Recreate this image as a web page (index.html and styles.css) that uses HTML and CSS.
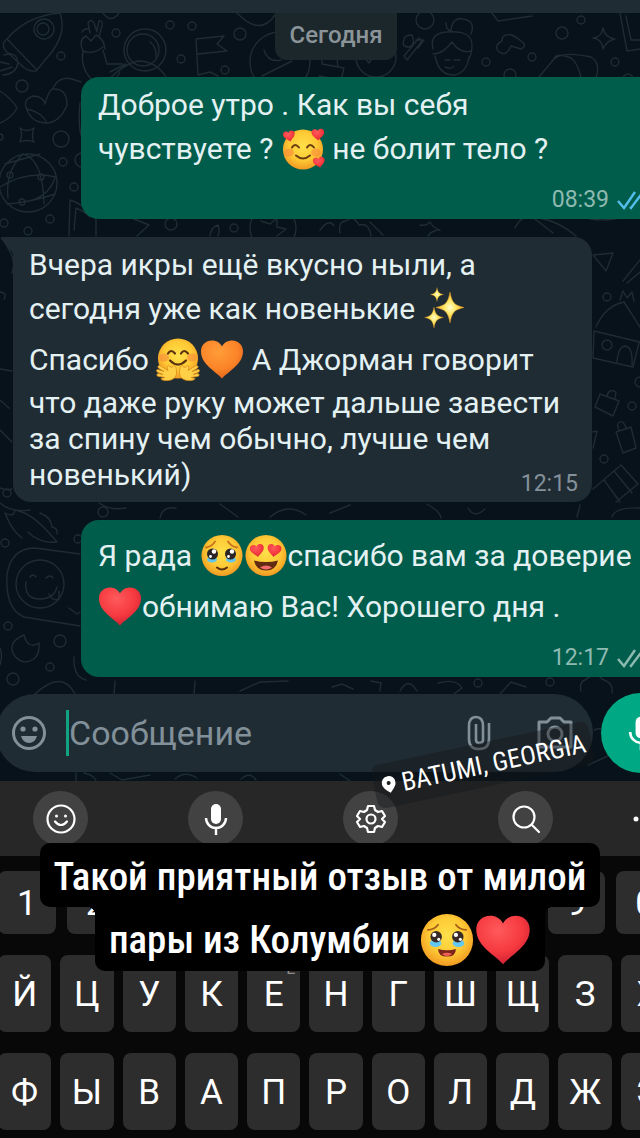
FILE: index.html
```html
<!DOCTYPE html>
<html lang="ru">
<head>
<meta charset="utf-8">
<meta name="viewport" content="width=device-width, initial-scale=1">
<title>Сообщения</title>
<link rel="stylesheet" href="styles.css">
</head>
<body>
<svg class="defs" aria-hidden="true">
  <defs>
    <radialGradient id="skin" cx="50%" cy="42%" r="58%">
      <stop offset="0" stop-color="#ffe04a"/><stop offset=".6" stop-color="#fdca35"/><stop offset="1" stop-color="#f19a22"/>
    </radialGradient>
    <radialGradient id="redheart" cx="42%" cy="30%" r="75%">
      <stop offset="0" stop-color="#ff5a5c"/><stop offset=".6" stop-color="#f5393f"/><stop offset="1" stop-color="#c91d33"/>
    </radialGradient>
    <radialGradient id="orangeheart" cx="42%" cy="30%" r="75%">
      <stop offset="0" stop-color="#ff9d38"/><stop offset=".6" stop-color="#fb8428"/><stop offset="1" stop-color="#e0621a"/>
    </radialGradient>
    <radialGradient id="spark" cx="50%" cy="50%" r="50%">
      <stop offset="0" stop-color="#fffbd0"/><stop offset=".4" stop-color="#ffe866"/><stop offset="1" stop-color="#eda826"/>
    </radialGradient>
    <path id="heart" d="M22 41C16 34 1 27 1 14 1 7 6 3 12 3c4 0 8 2 10 6 2-4 6-6 10-6 6 0 11 4 11 11 0 13-15 20-21 27z"/>
    <path id="star" d="M0-10C1.500-3 3-1.500 10 0 3 1.500 1.500 3 0 10-1.500 3-3 1.500-10 0-3-1.500-1.500-3 0-10z"/>
    <symbol id="e-adore" viewBox="0 0 44 44">
      <circle cx="22" cy="23" r="20" fill="url(#skin)"/>
      <ellipse cx="8" cy="26" rx="5" ry="4" fill="#f98a3c" opacity=".6"/><ellipse cx="35" cy="26" rx="5" ry="4" fill="#f98a3c" opacity=".6"/>
      <path d="M11 21q3-5 7 0M26 21q3-5 7 0" fill="none" stroke="#6b3d11" stroke-width="2" stroke-linecap="round"/>
      <path d="M15 29q7 6 14 0" fill="none" stroke="#6b3d11" stroke-width="2" stroke-linecap="round"/>
      <g fill="url(#redheart)"><use href="#heart" transform="translate(1 5) rotate(-12) scale(.28)"/><use href="#heart" transform="translate(30 2) rotate(-4) scale(.3)"/><use href="#heart" transform="translate(31 31) rotate(-10) scale(.28)"/></g>
    </symbol>
    <symbol id="e-hug" viewBox="0 0 44 44">
      <circle cx="22" cy="21" r="20" fill="url(#skin)"/>
      <ellipse cx="8" cy="20" rx="5" ry="4" fill="#f98a3c" opacity=".6"/><ellipse cx="36" cy="20" rx="5" ry="4" fill="#f98a3c" opacity=".6"/>
      <path d="M12 16q3-5 7 0M25 16q3-5 7 0M14 23q8 8 16 0" fill="none" stroke="#5b3210" stroke-width="2.200" stroke-linecap="round"/>
      <g fill="#ffcf45" stroke="#d98a1c" stroke-width=".8" stroke-linejoin="round">
        <path d="M14 29c-2-2-4 0-2 4l-8-5c-2 0-3 1-1 3l5 3-6-2c-2 0-2 2 0 3l5 2-5-1c-2 1-1 3 1 3l6 1-4 1c0 2 7 3 11 1 5-2 5-7 4-12-1-2-3-3-4 0z"/>
        <path d="M30 29c2-2 4 0 2 4l8-5c2 0 3 1 1 3l-5 3 6-2c2 0 2 2 0 3l-5 2 5-1c2 1 1 3-1 3l-6 1 4 1c0 2-7 3-11 1-5-2-5-7-4-12 1-2 3-3 4 0z"/>
      </g>
    </symbol>
    <symbol id="e-orange" viewBox="0 0 44 44"><use href="#heart" fill="url(#orangeheart)"/></symbol>
    <symbol id="e-red" viewBox="0 0 44 44"><use href="#heart" fill="url(#redheart)"/></symbol>
    <symbol id="e-sparkles" viewBox="0 0 44 44">
      <g fill="url(#spark)" stroke="#e39b27" stroke-width=".3"><use href="#star" transform="translate(27 21) scale(1.400 1.550)"/><use href="#star" transform="translate(14 8) scale(.65 .7)"/><use href="#star" transform="translate(11 31) scale(.95 1.050)"/></g>
    </symbol>
    <symbol id="e-tears" viewBox="0 0 44 44">
      <circle cx="22" cy="22" r="20.500" fill="url(#skin)"/>
      <ellipse cx="12" cy="26" rx="5" ry="3" fill="#62c6ee"/><ellipse cx="31" cy="26" rx="5" ry="3" fill="#62c6ee"/>
      <circle cx="12.500" cy="20.500" r="5.500" fill="#2c2424"/><circle cx="30.500" cy="20.500" r="5.500" fill="#2c2424"/>
      <g fill="#fff"><circle cx="14" cy="18" r="2.200"/><circle cx="32" cy="18" r="2.200"/><circle cx="10.500" cy="23" r="1.400"/><circle cx="28.500" cy="23" r="1.400"/></g>
      <path d="M6 14q6-1 9-6M37 14q-6-1-9-6" fill="none" stroke="#c9741d" stroke-width="1.800" stroke-linecap="round"/>
      <path d="M17 34q5 4 10 0" fill="none" stroke="#5b3210" stroke-width="2" stroke-linecap="round"/>
    </symbol>
    <symbol id="e-tears-open" viewBox="0 0 44 44">
      <circle cx="22" cy="22" r="20.500" fill="url(#skin)"/>
      <ellipse cx="13" cy="24.500" rx="4.500" ry="3" fill="#63c9f2"/><ellipse cx="31" cy="24.500" rx="4.500" ry="3" fill="#63c9f2"/>
      <circle cx="13.500" cy="19.500" r="4.500" fill="#382a27"/><circle cx="30.500" cy="19.500" r="4.500" fill="#382a27"/>
      <g fill="#fff"><circle cx="12" cy="18" r="1.700"/><circle cx="29" cy="18" r="1.700"/><circle cx="15.500" cy="21.500" r="1.200"/><circle cx="32.500" cy="21.500" r="1.200"/></g>
      <path d="M7 14q5 0 8-4M37 14q-5 0-8-4" fill="none" stroke="#a85d19" stroke-width="1.400" stroke-linecap="round"/>
      <path d="M15 29q7 2 14 0 0 6-7 6t-7-6z" fill="#7d251c"/><path d="M18 33q4-2 8 0-4 3-8 0z" fill="#ef6158"/>
    </symbol>
    <symbol id="e-hearteyes" viewBox="0 0 44 44">
      <circle cx="22" cy="22" r="20.500" fill="url(#skin)"/>
      <g fill="url(#redheart)"><use href="#heart" transform="translate(5 11) rotate(-8) scale(.33)"/><use href="#heart" transform="translate(24 9) rotate(8) scale(.33)"/></g>
      <path d="M10 27q12 3 24 0-2 10-12 10T10 27z" fill="#612b12"/><path d="M16 34q6-4 12 0-6 4-12 0z" fill="#f06b6b"/>
    </symbol>
    <symbol id="ticks" viewBox="0 0 32 20"><path d="M1 11l6 7L18 2M13 17l1 1L26 2" fill="none" stroke="currentColor" stroke-width="2.400"/></symbol>
    <symbol id="mic" viewBox="0 0 24 32"><rect x="7" y="1" width="10" height="20" rx="5" fill="currentColor"/><path d="M2 15a10 10 0 0 0 20 0M12 25v7" fill="none" stroke="currentColor" stroke-width="2.400"/></symbol>
  </defs>
</svg>

<main class="screen">
  <div class="topbar"></div>
  <section class="chat">
    <svg class="wallpaper" viewBox="0 13 640 768" preserveAspectRatio="xMidYMin slice" aria-hidden="true">
      <g fill="none" stroke="#1f2c33" stroke-width="1.400" stroke-linecap="round" stroke-linejoin="round">
        <path d="M7 39Q26 16 60 13q8 22-14 46l-10 12q-8 1-15-6L5 50q-4-7 2-11zM7 39l29 30M4 55q13-4 14 8-2 11-15 12M0 62l9 2M0 71l12-4"/>
        <circle cx="44" cy="29" r="10"/><circle cx="43" cy="29" r="6"/><circle cx="61" cy="56" r="4"/><circle cx="22" cy="86" r="6"/>
        <path d="M83 51q-5-11 3-15l5 5 5-6q8 4 9 14M90 33l-2-10q3-5 6 0l3 9M97 30l2-9q4-1 3 5l-3 10M83 51q10 4 20-4M83 51q-3 16 8 28M103 50l4 14h16M82 32q2-4 7-3"/>
        <circle cx="145" cy="50" r="21"/><circle cx="143" cy="50" r="16"/><path d="M150 42q7 5 6 15M108 80q16-16 30-19 18 0 28 16M110 72l16-8M120 72l-5 8"/>
        <circle cx="170" cy="25" r="4"/><circle cx="192" cy="26" r="4"/><circle cx="116" cy="33" r="4"/><circle cx="181" cy="59" r="4"/><circle cx="240" cy="34" r="6"/><circle cx="225" cy="70" r="4"/>
        <path d="M198 75l-2-36 28-3-7 8 10 7-29 3M198 75l12-3 8 4M103 13q8 11 16 0M237 13q23 24 38 2"/>
        <circle cx="280" cy="62" r="30"/><path d="M262 76l30-15M264 50q4 13 17 10"/>
        <path d="M0 91q12 8 17 17Q12 118 0 123M53 88q7-14 22-8l6 2M53 88q-5 4-8 16-2-8-12-8-11 4-6 14 5 13 20 13 13-1 20-18 0-17-14-16M27 109q15 3 20 14M80 103q-2 20 1 32"/>
        <path d="M20 128q7 5 14 0-3 8 0 14-7-3-14 0 3-8 0-14z"/><circle cx="61" cy="139" r="8"/><circle cx="63" cy="162" r="4"/><circle cx="74" cy="187" r="4"/><circle cx="82" cy="160" r="7"/><circle cx="0" cy="137" r="3"/>
        <circle cx="28" cy="183" r="29"/><path d="M5 164l35-10M0 187q27-17 56-10M7 204q25-2 48-10M23 154q-18 17-15 44M23 154q20 5 21 50M55 178q-8 22-33 24"/><circle cx="10" cy="175" r="3"/><circle cx="41" cy="177" r="3"/><circle cx="22" cy="202" r="3"/>
        <path d="M69 236l1-36q14 4 26 19v17M74 230l2-22q8 3 14 9"/><circle cx="50" cy="219" r="4"/><circle cx="28" cy="231" r="4"/><circle cx="4" cy="223" r="4"/><circle cx="171" cy="224" r="6"/><circle cx="234" cy="228" r="4"/><path d="M134 219l15 6-12 11M210 236q1-9 8-11 2 6 0 11"/><circle cx="273" cy="228" r="23"/><path d="M261 221l9 3 7-6v9l9 2-9 7"/>
        <path d="M322 57v7l22 4-3 12-22-4M330 58l7 1 1 8"/><circle cx="376" cy="57" r="20"/><path d="M364 57l5 6 6-9"/><circle cx="425" cy="20" r="9"/>
        <path d="M416 40h8l-6 8M404 40q0-5 8-5 4 10-3 12-8 0-5-7zM404 56l15-18 3 3-15 19z"/>
        <path d="M433 49q-4-16 14-17 25-2 25 13 0 10-4 15M433 54q10 0 19-12 8 12 19 9M435 56q4 20 20 19 12-3 14-18M451 31q1-14 12-12 13 2 8 15M446 23q0 7 5 8M445 60h5M454 60h6M445 67q7 3 9-1"/>
        <circle cx="486" cy="62" r="4"/><circle cx="532" cy="57" r="4"/><circle cx="562" cy="33" r="6"/><circle cx="581" cy="20" r="4"/><circle cx="615" cy="62" r="4"/><circle cx="510" cy="75" r="6"/><circle cx="628" cy="79" r="5"/>
        <path d="M498 51q-4-6 4-10 0-8 10-6 6 3 9 6 7 4 0 8l-10-3q-5 12-13 5zM492 13l6 8 34-5M593 38q9-1 10-10 2 10 12 11-9 2-12 10-1-10-10-11zM620 13l7 38 13-2M626 16l5 24h9M539 77l15-18q10-8 37-2 10 6 5 21M554 59q2-7 17-1 6 4 10 19"/>
        <path d="M320 230q9-12 14-4M340 233q-2-12 6-12 7-7 13 4 10-3 12 11M420 225q7 1 10-3 3 6 10 8-8 0-12 6M370 222l13 13M515 228q8-16 20-9l18 14M540 218q20 4 36 18M590 219q20 3 38-4"/>
        <path d="M593 255l20-2-7 18zM623 281l17-21M627 283l13-11M596 327q9-21 28-25l16 25M620 300l3-9 4 7 5-6 2 9M594 331l46 11M594 331l-1 27 40 9 6-24M617 362q1-15 8-16 8 1 7 19"/><circle cx="607" cy="297" r="4"/><circle cx="607" cy="345" r="5"/>
        <path d="M600 394l19 7-6 15-18-9zM607 396q2-8 9-4l-1 6M616 432l15-5 5 21-13 5zM619 430q-4-9 4-8l4 7M592 432l5-1-4 17M593 489l28-24 17 19-22 18M604 480l16 22M614 471l18 22"/><circle cx="632" cy="406" r="4"/><circle cx="604" cy="459" r="4"/><circle cx="640" cy="382" r="5"/>
        <path d="M0 369l12 2M0 400l9 8M0 430l12 12M0 488q6 3 12 1M3 239l7 13q6 10 2 21M0 292q8 1 4 7"/><circle cx="7" cy="493" r="4"/>
        <path d="M5 513q7 18 17 25M5 513q9 5 10-3M18 511q15 2 39 31-17 2-29-10M40 513q11 4 12 14 6 1 5 7"/><circle cx="103" cy="512" r="5"/><circle cx="5" cy="543" r="4"/><circle cx="78" cy="539" r="4"/>
        <path d="M80 554l-45-6q-24 0-28 27-2 34 17 42l56 9"/><circle cx="40" cy="584" r="24"/><path d="M30 577q3-4 6 0M46 578q4-4 7 0M26 582q-2 17 14 17 14 0 17-12M49 594q4 8 10 5v-8M69 608l8 6 3-2"/>
        <path d="M24 635q-17 7-10 20 9 12 21 3 5-6 4-15-11 7-15-8z"/><circle cx="60" cy="641" r="6"/><circle cx="50" cy="667" r="4"/><circle cx="13" cy="679" r="6"/><circle cx="8" cy="626" r="4"/><path d="M0 648q3 8 0 17M74 657q-1 20 12 23M35 694q27-25 40 0"/>
        <path d="M115 681l-1 13M195 681l-1 13M240 691l20-9 28-1M332 687l10-3 11 5M371 681l10 2-1 8M400 691q8-15 17 0M438 683q18-5 24 5l-8 6M500 694l11-12 15 5M581 691q-2-9 4-11 11-9 17-1 12 4 10 14"/><circle cx="478" cy="683" r="4"/><circle cx="550" cy="682" r="4"/>
        <path d="M76 781v-8M84 773q10 2 12 8M110 773l12 7 28-5M175 779q10-9 22-1M241 779q9-8 15 1M340 774l10 7M447 773q11-5 14 8M594 730q13-5 11 9M588 765l20-9 5-25"/>
        <path d="M0 503q12 10 30 7M99 503q12 8 27 5M160 518q2-12 16-10M220 504l18 13M270 517q18-15 36-2M330 513l20-8M427 504q13 7 14 14M468 508q6 11 17 1M580 505l-3 12M612 517q3-10 28-9"/>
      </g>
    </svg>

    <div class="day">Сегодня</div>

    <article class="bubble bubble--out">
      <p class="text">Доброе утро . Как вы себя<br>чувствуете ? <svg class="emoji" role="img" aria-label="🥰"><use href="#e-adore"/></svg> не болит тело ?</p>
      <div class="meta meta--read"><time>08:39</time><svg class="ticks" role="img" aria-label="Прочитано"><use href="#ticks"/></svg></div>
    </article>

    <article class="bubble bubble--in">
      <svg class="tail" viewBox="0 0 14 18" aria-hidden="true"><path d="M14 0H2Q0 0 1 2l13 16z" fill="#202c33"/></svg>
      <p class="text">Вчера икры ещё вкусно ныли, а<br>сегодня уже как новенькие <svg class="emoji" role="img" aria-label="✨"><use href="#e-sparkles"/></svg><br>Спасибо <svg class="emoji" role="img" aria-label="🤗"><use href="#e-hug"/></svg><svg class="emoji" role="img" aria-label="🧡"><use href="#e-orange"/></svg> А Джорман говорит<br>что даже руку может дальше завести<br>за спину чем обычно, лучше чем<br>новенький)</p>
      <div class="meta"><time>12:15</time></div>
    </article>

    <article class="bubble bubble--out">
      <p class="text">Я рада <svg class="emoji" role="img" aria-label="🥹"><use href="#e-tears"/></svg><svg class="emoji" role="img" aria-label="😍"><use href="#e-hearteyes"/></svg>спасибо вам за доверие<br><svg class="emoji" role="img" aria-label="❤️"><use href="#e-red"/></svg>обнимаю Вас! Хорошего дня .</p>
      <div class="meta"><time>12:17</time><svg class="ticks" role="img" aria-label="Доставлено"><use href="#ticks"/></svg></div>
    </article>

    <form class="composer">
      <div class="field">
        <button class="icon" type="button" aria-label="Эмодзи"><svg width="36" height="36" viewBox="0 0 36 36"><circle cx="18" cy="18" r="15.500" fill="none" stroke="currentColor" stroke-width="3"/><circle cx="12" cy="14" r="2.600" fill="currentColor"/><circle cx="24" cy="14" r="2.600" fill="currentColor"/><path d="M10 21h16q-2 7-8 7t-8-7z" fill="currentColor"/></svg></button>
        <span class="entry"><input type="text" aria-label="Сообщение" placeholder="Сообщение"></span>
        <button class="icon" type="button" aria-label="Прикрепить"><svg width="24" height="36" viewBox="0 0 24 36"><path d="M22 8v16q0 10-10 10T2 24V11q0-9 7-9t7 9v14q0 3-3.500 3T9 25V9" fill="none" stroke="currentColor" stroke-width="2.600"/></svg></button>
        <button class="icon icon--camera" type="button" aria-label="Камера"><svg width="36" height="34" viewBox="0 0 36 34"><path d="M2 6h8l4-4h9l4 4h7v25H2z" fill="none" stroke="currentColor" stroke-width="3" stroke-linejoin="round"/><circle cx="18" cy="18" r="7" fill="none" stroke="currentColor" stroke-width="3"/></svg></button>
      </div>
      <button class="voice" type="button" aria-label="Голосовое сообщение"><svg width="26" height="36"><use href="#mic"/></svg></button>
    </form>
  </section>

  <section class="keyboard">
    <a class="place" href="#batumi"><svg width="14" height="18" viewBox="0 0 14 18" aria-hidden="true"><path fill-rule="evenodd" d="M7 17Q0 11 0 7a7 7 0 0 1 14 0q0 4-7 10zM7 5a2 2 0 1 0 0 4 2 2 0 0 0 0-4z" fill="#fff"/></svg><span>BATUMI, GEORGIA</span></a>

    <div class="tools">
      <button class="tool" type="button" aria-label="Смайлики"><svg width="30" height="30" viewBox="0 0 30 30" fill="none" stroke="#fff" stroke-width="2.200"><circle cx="15" cy="15" r="13.500"/><path d="M9 17.500q6 7 12 0" stroke-linecap="round"/><circle cx="10.500" cy="12" r="1.500" fill="#fff" stroke="none"/><circle cx="19.500" cy="12" r="1.500" fill="#fff" stroke="none"/></svg></button>
      <button class="tool" type="button" aria-label="Голосовой ввод"><svg width="24" height="32"><use href="#mic"/></svg></button>
      <button class="tool" type="button" aria-label="Настройки"><svg width="30" height="30" viewBox="0 0 30 30" fill="none" stroke="#fff" stroke-width="2.200" stroke-linejoin="round"><path d="M12 2h6l1 4 3 2 4-1 3 5-3 3 3 3-3 5-4-1-3 2-1 4h-6l-1-4-3-2-4 1-3-5 3-3-3-3 3-5 4 1 3-2z"/><circle cx="15" cy="15" r="4.500"/></svg></button>
      <button class="tool" type="button" aria-label="Поиск"><svg width="30" height="30" viewBox="0 0 30 30" fill="none" stroke="#fff" stroke-width="2.200" stroke-linecap="round"><circle cx="13" cy="13" r="10.500"/><path d="M21 21l7 7"/></svg></button>
      <button class="more" type="button" aria-label="Ещё"><svg width="30" height="8" viewBox="0 0 30 8" fill="#fff"><circle cx="3" cy="4" r="2.500"/><circle cx="14" cy="4" r="2.500"/><circle cx="25" cy="4" r="2.500"/></svg></button>
    </div>

    <div class="keys">
      <div class="row row--digits"><button type="button">1</button><button type="button">2</button><button type="button">3</button><button type="button">4</button><button type="button">5</button><button type="button">6</button><button type="button">7</button><button type="button">8</button><button type="button">9</button><button type="button">0</button></div>
      <div class="row"><button type="button">Й</button><button type="button">Ц</button><button type="button">У</button><button type="button">К</button><button type="button">Е<span class="alt">Ё</span></button><button type="button">Н</button><button type="button">Г</button><button type="button">Ш</button><button type="button">Щ</button><button type="button">З</button><button type="button">Х</button></div>
      <div class="row"><button type="button">Ф</button><button type="button">Ы</button><button type="button">В</button><button type="button">А</button><button type="button">П</button><button type="button">Р</button><button type="button">О</button><button type="button">Л</button><button type="button">Д</button><button type="button">Ж</button><button type="button">Э</button></div>
    </div>

    <div class="caption">
      <span class="caption__line">Такой приятный отзыв от милой</span>
      <span class="caption__line caption__line--last">пары из Колумбии <svg class="caption__emoji" role="img" aria-label="🥹"><use href="#e-tears-open"/></svg><svg class="caption__emoji" role="img" aria-label="❤️"><use href="#e-red"/></svg></span>
    </div>
  </section>
</main>
</body>
</html>
```
FILE: styles.css
```css
* { box-sizing: border-box; }

body {
  margin: 0;
  background: #080808;
  font-family: Roboto, "Noto Sans", sans-serif;
}

button {
  padding: 0;
  border: 0;
  background: none;
  color: inherit;
  font: inherit;
}

svg { display: block; }
.defs { position: absolute; width: 0; height: 0; }

.screen { overflow: hidden; }
.topbar { height: 13px; background: #202c33; }

/* Chat */
.chat {
  position: relative;
  display: flex;
  flex-direction: column;
  padding-bottom: 8px;
  background: #07121a;
}
.chat > * { position: relative; }
.chat > .wallpaper {
  position: absolute;
  top: 0;
  left: 0;
  width: 100%;
  height: 100%;
}

.day {
  align-self: center;
  margin: 0 0 17px 32px;
  padding: 0 15px 2px;
  border-radius: 0 0 12px 12px;
  background: #1c272c;
  color: #8b9498;
  font-size: 24px;
  font-weight: 500;
  line-height: 45px;
}

.bubble {
  margin-bottom: 18px;
  border-radius: 18px;
  color: #e4f1f3;
}
.bubble--out {
  margin-left: 81px;
  margin-right: -24px;
  padding: 10px 15px 5px 17px;
  background: #005d4b;
}
.bubble--in {
  display: grid;
  align-self: flex-start;
  width: calc(100% - 61px);
  margin-left: 13px;
  padding: 10px 14px 4px 16px;
  border-top-left-radius: 0;
  background: #202c33;
}
.bubble--in .text, .bubble--in .meta { grid-area: 1 / 1; }
.bubble--in .text { padding-bottom: 5px; }
.bubble--in .meta { align-self: end; margin: 0; color: #84919a; }
.tail { position: absolute; top: 0; left: -13px; width: 14px; height: 18px; }

.text {
  margin: 0;
  font-size: 30px;
  line-height: 36px;
  white-space: nowrap;
}
.emoji {
  display: inline-block;
  width: 44px;
  height: 51px;
  padding: 3px 0;
  vertical-align: -15px;
}
.meta {
  display: flex;
  justify-content: flex-end;
  align-items: center;
  gap: 8px;
  margin-top: 12px;
  color: #8fbab1;
  font-size: 23px;
  line-height: 28px;
}
.ticks { width: 32px; height: 20px; }
.meta--read .ticks { color: #53bdeb; }

.composer {
  display: flex;
  align-items: center;
  gap: 8px;
  margin: -2px -41px 0 -4px;
}
.field {
  display: flex;
  flex: 1;
  align-items: center;
  height: 78px;
  padding: 0 20px 0 15px;
  border-radius: 39px;
  background: #202c33;
  color: #82909a;
}
.entry {
  flex: 1;
  min-width: 0;
  margin: 0 20px 0 19px;
  border-left: 3px solid #10a483;
}
.entry input {
  display: block;
  width: 100%;
  height: 46px;
  padding: 0;
  border: 0;
  outline: 0;
  background: none;
  color: #e9edef;
  font: 34px Roboto, "Noto Sans", sans-serif;
}
.entry input::placeholder { color: #82909a; opacity: 1; }
.icon--camera { margin-left: 46px; }
.voice {
  display: grid;
  place-items: center;
  width: 80px;
  height: 80px;
  border-radius: 50%;
  background: #00a884;
  color: #fff;
}

/* Keyboard */
.keyboard { position: relative; background: #080808; color: #fff; }

.place {
  position: absolute;
  z-index: 1;
  top: -38px;
  right: 46px;
  display: flex;
  align-items: center;
  gap: 6px;
  height: 44px;
  padding: 0 6px 0 8px;
  border-radius: 8px;
  background: rgba(20, 22, 24, .4);
  color: #fff;
  font-family: "Roboto Condensed", "Liberation Sans Narrow", "DejaVu Sans Condensed", sans-serif;
  font-size: 26px;
  text-decoration: none;
  white-space: nowrap;
  transform: rotate(-12deg);
}

.tools {
  display: grid;
  grid-template-columns: repeat(4, 1fr) auto;
  align-items: center;
  justify-items: center;
  height: 75px;
  margin: 0 -23px 0 -17px;
  background: #272727;
}
.tool {
  display: grid;
  place-items: center;
  width: 55px;
  height: 55px;
  border-radius: 50%;
  background: #424242;
}
.more { padding-left: 30px; }

.keys {
  display: grid;
  gap: 21px;
  margin: 0 -34px 0 -2px;
  padding: 15px 0 8px;
}
.row {
  display: grid;
  grid-template-columns: repeat(11, 1fr);
  gap: 9px;
}
.row button {
  position: relative;
  height: 77px;
  padding-top: 3px;
  border-radius: 8px;
  background: #2d2d2d;
  font-size: 35px;
  line-height: 40px;
}
.row--digits { grid-template-columns: repeat(10, 1fr); gap: 11px; }
.row--digits button { height: 63px; }
.row .alt {
  position: absolute;
  top: 4px;
  right: 5px;
  color: #8a8a8a;
  font-size: 16px;
  line-height: 20px;
}

.caption {
  position: absolute;
  top: 62px;
  left: 0;
  right: 0;
  display: flex;
  flex-direction: column;
  align-items: center;
  font-family: "Roboto Condensed", "Liberation Sans Narrow", "DejaVu Sans Condensed", sans-serif;
  font-size: 39px;
  font-weight: 500;
  white-space: nowrap;
}
.caption__line {
  display: flex;
  align-items: center;
  height: 64px;
  padding: 4px 14px 0;
  border-radius: 10px;
  background: #000;
  white-space: pre;
}
.caption__line--last {
  position: relative;
  padding: 2px 14px 0;
  border-radius: 0 0 10px 10px;
}
.caption__line--last::before,
.caption__line--last::after {
  content: "";
  position: absolute;
  top: 0;
  width: 8px;
  height: 8px;
}
.caption__line--last::before {
  right: 100%;
  background: radial-gradient(circle at 0 100%, transparent 8px, #000 8px);
}
.caption__line--last::after {
  left: 100%;
  background: radial-gradient(circle at 100% 100%, transparent 8px, #000 8px);
}
.caption__emoji { width: 56px; height: 56px; }
```
